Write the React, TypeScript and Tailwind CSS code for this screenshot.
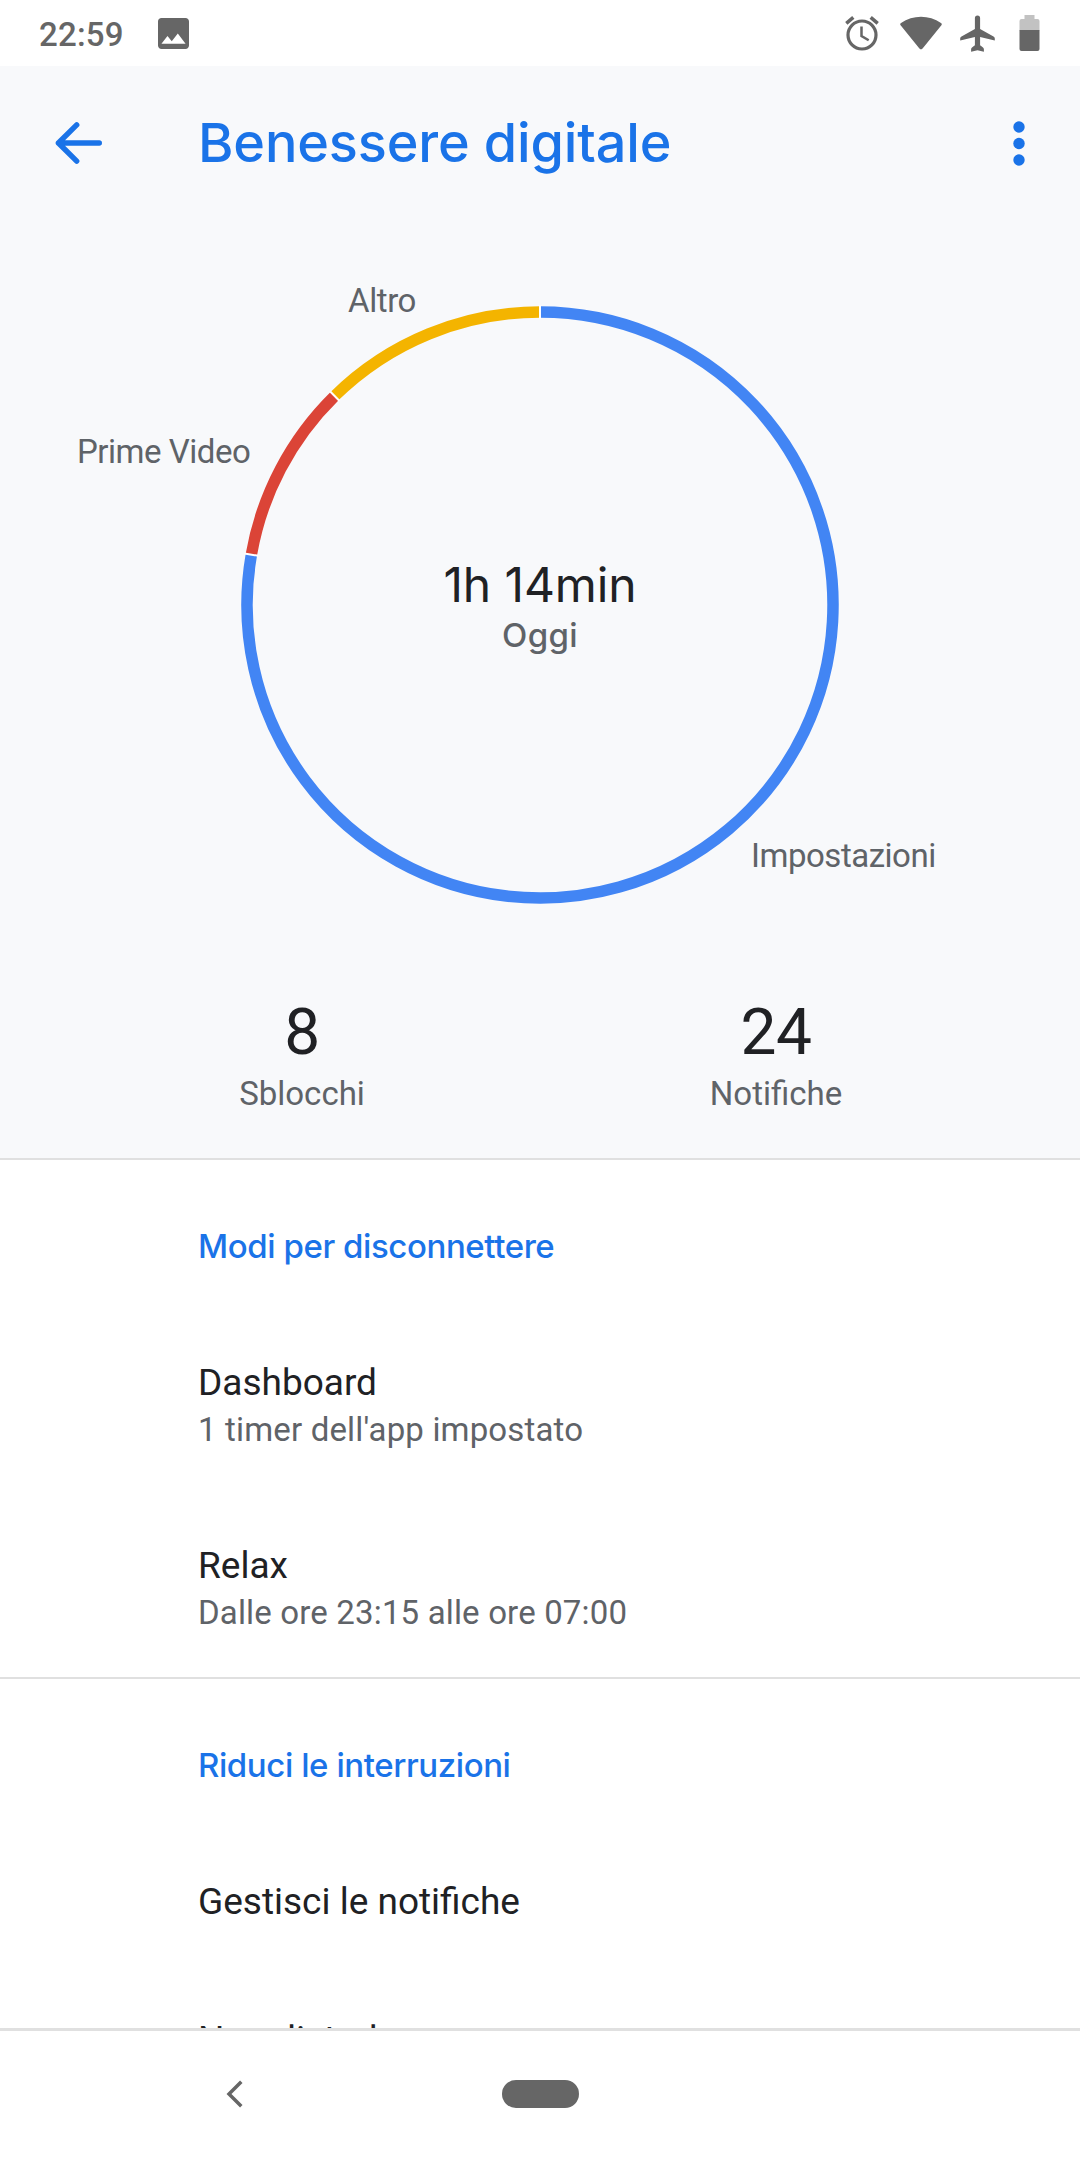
import React from "react";

interface UsageSlice {
  name: string;
  color: string;
  start: number;
  end: number;
}

interface Preference {
  title: string;
  summary?: string;
}

const slices: UsageSlice[] = [
  { name: "Impostazioni", color: "#4285f4", start: 0, end: 279.9 },
  { name: "Prime Video", color: "#db4437", start: 279.9, end: 315.5 },
  { name: "Altro", color: "#f4b400", start: 315.5, end: 360 },
];

const disconnectItems: Preference[] = [
  { title: "Dashboard", summary: "1 timer dell'app impostato" },
  { title: "Relax", summary: "Dalle ore 23:15 alle ore 07:00" },
];

const CX = 540;
const CY = 385;
const RADIUS = 293;

const point = (deg: number, r: number) => {
  const a = ((deg - 90) * Math.PI) / 180;
  return { x: CX + r * Math.cos(a), y: CY + r * Math.sin(a) };
};

const arc = (start: number, end: number) => {
  const a = point(start, RADIUS);
  const b = point(end - 0.01, RADIUS);
  return `M${a.x} ${a.y}A${RADIUS} ${RADIUS} 0 ${end - start > 180 ? 1 : 0} 1 ${b.x} ${b.y}`;
};

const StatusBar: React.FC = () => (
  <div className="flex h-[66px] shrink-0 items-center bg-white pl-[39px] pr-[40px] text-[#666666]">
    <span className="w-[119px] pt-[3px] font-['Roboto',sans-serif] text-[33px] font-medium leading-[40px] tracking-[0.2px]">22:59</span>
    <svg className="mt-[1px] h-[31px] w-[31px]" viewBox="3 3 18 18" fill="currentColor">
      <path d="M21 19V5c0-1.100-.9-2-2-2H5c-1.100 0-2 .9-2 2v14c0 1.100.9 2 2 2h14c1.100 0 2-.9 2-2zM8.500 13.500l2.500 3.010L14.500 12l4.500 6H5l3.500-4.500z" />
    </svg>
    <div className="ml-auto flex items-center">
      <svg className="h-[35px] w-[34px]" viewBox="0 0 34 35" fill="none" stroke="currentColor">
        <circle cx="17" cy="19" r="14" strokeWidth="3.200" />
        <path d="M16.500 10.500v9.500l7.200 4.300" strokeWidth="2.500" />
        <path d="M1.300 7.300L8.300 1.400M25.700 1.400l7 5.900" strokeWidth="3.500" />
      </svg>
      <svg className="ml-[21px] h-[34px] w-[42px]" viewBox="0 0 42 34" fill="currentColor">
        <path d="M1 7C7 3 14 .8 21 .8S35 3 41 7c.9.6 1 1.500.4 2.300L22.600 32.600c-.9 1.100-2.300 1.100-3.200 0L.6 9.300C0 8.500.1 7.600 1 7z" />
      </svg>
      <svg className="ml-[18px] h-[37px] w-[35px]" viewBox="0 0 35 37" fill="currentColor">
        <path d="M14.900 3a2.600 2.600 0 0 1 5.200 0v11l13.400 7.600c1 .6 1.300 1.200 1.300 2.300v1.700L20.100 22v8.300l2.600 2c.8.6 1.200 1.200 1.200 2.200v2.300l-6.400-1.600-6.400 1.600v-2.300c0-1 .4-1.600 1.200-2.200l2.600-2V22L.2 25.600v-1.700c0-1.100.3-1.700 1.300-2.300L14.900 14z" />
      </svg>
      <svg className="ml-[24px] h-[36px] w-[21px]" viewBox="0 0 21 36" fill="currentColor">
        <path d="M5.500 0h10v4H18.500q2 0 2 2v9.500H.5V6q0-2 2-2h3z" fill="#c2c2c2" />
        <path d="M.5 15h20v19q0 2-2 2h-16q-2 0-2-2z" />
      </svg>
    </div>
  </div>
);

const AppBar: React.FC = () => (
  <header className="flex h-[154px] items-center pl-[55px] pr-[55px] text-[#1a73e8]">
    <svg className="h-[42px] w-[47px]" viewBox="0 0 47 42" fill="none" stroke="currentColor" strokeWidth="5.400" strokeLinecap="round" strokeLinejoin="round">
      <path d="M44.300 21H3.400M21.700 2.900L3.400 21l18.300 18.100" />
    </svg>
    <h1 className="ml-[96px] whitespace-nowrap font-['Inter',sans-serif] text-[54px] font-medium leading-[64px] tracking-[-0.150px]">
      Benessere digitale
    </h1>
    <svg className="ml-auto h-[45px] w-[12px]" viewBox="0 0 12 45" fill="currentColor">
      <circle cx="6" cy="6" r="5.700" />
      <circle cx="6" cy="22.500" r="5.700" />
      <circle cx="6" cy="39" r="5.700" />
    </svg>
  </header>
);

const UsageChart: React.FC = () => (
  <div className="relative flex h-[770px] flex-col items-center pt-[335px]">
    <svg className="absolute inset-0 h-[770px] w-[1080px]" viewBox="0 0 1080 770" fill="none">
      {slices.map((s) => (
        <path key={s.name} d={arc(s.start, s.end)} stroke={s.color} strokeWidth="11.500" />
      ))}
      {slices.map((s) => {
        const a = point(s.start, RADIUS - 7);
        const b = point(s.start, RADIUS + 7);
        return <path key={s.name} d={`M${a.x} ${a.y}L${b.x} ${b.y}`} stroke="#ffffff" strokeWidth="2" />;
      })}
    </svg>
    <div className="font-['Inter',sans-serif] text-[48px] leading-[60px] tracking-[-0.100px] text-[#202124]">1h 14min</div>
    <div className="font-['Inter',sans-serif] text-[33px] font-medium leading-[40px] tracking-[0.400px] text-[#5f6368]">Oggi</div>
    <span className="absolute left-[348px] top-[61px] font-['Roboto',sans-serif] text-[33px] leading-[40px] tracking-[-0.400px] text-[#5f6368]">Altro</span>
    <span className="absolute left-[77px] top-[212px] font-['Roboto',sans-serif] text-[33px] leading-[40px] tracking-[-0.480px] text-[#5f6368]">Prime Video</span>
    <span className="absolute left-[751px] top-[616px] font-['Roboto',sans-serif] text-[33px] leading-[40px] tracking-[-0.480px] text-[#5f6368]">Impostazioni</span>
  </div>
);

const Stat: React.FC<{ value: string; label: string }> = ({ value, label }) => (
  <div className="flex flex-1 flex-col items-center">
    <span className="pt-px text-[64px] leading-[83px] tracking-[-0.500px] text-[#202124]">{value}</span>
    <span className="text-[33px] leading-[40px] text-[#5f6368]">{label}</span>
  </div>
);

const Category: React.FC<{ children: React.ReactNode }> = ({ children }) => (
  <h2 className="font-['Inter',sans-serif] text-[33px] font-medium leading-[40px] tracking-[-0.420px] text-[#1a73e8]">{children}</h2>
);

const PreferenceRow: React.FC<Preference> = ({ title, summary }) => (
  <div className="flex h-[183px] flex-col justify-center whitespace-nowrap">
    <span className="text-[37px] leading-[48px] text-[#202124]">{title}</span>
    {summary && <span className="text-[33px] leading-[46px] tracking-[0.160px] text-[#5f6368]">{summary}</span>}
  </div>
);

const NavigationBar: React.FC = () => (
  <nav className="flex h-[132px] shrink-0 items-center border-t-[3px] border-[#e0e0e0] bg-white pb-[3px] pl-[226px]">
    <svg className="h-[28px] w-[17px]" viewBox="0 0 17 28" fill="none" stroke="#666666" strokeWidth="3.500">
      <path d="M15.300 1.700L3 14l12.300 12.300" />
    </svg>
    <div className="ml-[259px] h-[28px] w-[77px] rounded-full bg-[#666666]" />
  </nav>
);

const App: React.FC = () => {
  return (
    <div className="flex h-[2160px] w-[1080px] flex-col overflow-hidden bg-white font-['Roboto',sans-serif]">
      <StatusBar />
      <main className="min-h-0 flex-1 overflow-hidden">
        <section className="h-[1094px] border-b-2 border-[#e0e0e0] bg-[#f8f9fb]">
          <AppBar />
          <UsageChart />
          <div className="flex pl-[65px] pr-[67px]">
            <Stat value="8" label="Sblocchi" />
            <Stat value="24" label="Notifiche" />
          </div>
        </section>
        <section className="h-[519px] border-b-2 border-[#e0e0e0] pl-[198px] pt-[66px]">
          <Category>Modi per disconnettere</Category>
          <div className="pt-[48px]">
            {disconnectItems.map((item) => (
              <PreferenceRow key={item.title} {...item} />
            ))}
          </div>
        </section>
        <section className="pl-[198px] pt-[66px]">
          <Category>Riduci le interruzioni</Category>
          <div className="pt-[93px]">
            <div className="h-[138px] text-[37px] leading-[48px] text-[#202124]">Gestisci le notifiche</div>
            <div className="h-[140px] text-[37px] leading-[48px] text-[#202124]">Non disturbare</div>
          </div>
        </section>
      </main>
      <NavigationBar />
    </div>
  );
};

export default App;
